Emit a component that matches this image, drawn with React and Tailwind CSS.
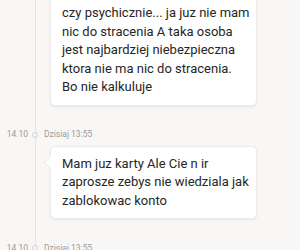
import React from "react";

function Stamp({ day, time }) {
  return (
    <div className="flex items-center h-[14px] text-[8.5px] text-[#9a9a9a] whitespace-nowrap">
      <span className="w-[28px] text-right">{day}</span>
      <div className="w-[14px] flex justify-center">
        <div className="w-[6px] h-[6px] rounded-full border border-[#cfcfcf] bg-[#f8f7f6]" />
      </div>
      <span className="ml-[2px]">{time}</span>
    </div>
  );
}

function Bubble({ lines, tail }) {
  return (
    <div className="relative ml-[50px] w-[207px] bg-white rounded-[5px] border border-[#ececec] shadow-[0_1px_2px_rgba(0,0,0,0.08)] px-[11px] py-[8px] text-[13px] leading-[18.5px] text-[#262626] whitespace-nowrap">
      {tail && (
        <div className="absolute left-[-5px] top-[11px] w-[9px] h-[9px] bg-white border-l border-b border-[#ececec] rotate-45" />
      )}
      {lines.map((l, i) => (
        <div key={i} className="relative">{l}</div>
      ))}
    </div>
  );
}

export default function App() {
  return (
    <div className="relative w-[300px] h-[250px] overflow-hidden bg-[#f8f7f6] font-['Roboto',sans-serif]">
      {/* timeline */}
      <div className="absolute left-[35px] top-0 bottom-0 w-px bg-[#e4e3e2]" />

      <div className="relative mt-[-5px]">
        <Bubble
          lines={[
            "czy psychicznie... ja juz nie mam",
            "nic do stracenia A taka osoba",
            "jest najbardziej niebezpieczna",
            "ktora nie ma nic do stracenia.",
            "Bo nie kalkuluje",
          ]}
        />
        <div className="mt-[22px]">
          <Stamp day="14.10" time="Dzisiaj 13:55" />
        </div>
        <div className="mt-[4px]">
          <Bubble
            tail
            lines={[
              "Mam juz karty Ale Cie n ir",
              "zaprosze zebys nie wiedziala jak",
              "zablokowac konto",
            ]}
          />
        </div>
        <div className="mt-[22px]">
          <Stamp day="14.10" time="Dzisiaj 13:55" />
        </div>
      </div>
    </div>
  );
}
